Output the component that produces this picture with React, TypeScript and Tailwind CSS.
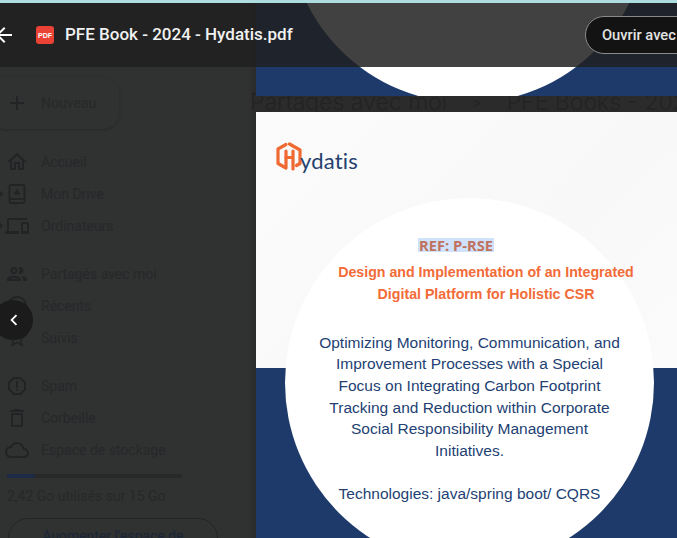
import {
  MdArrowBack,
  MdChevronLeft,
  MdOutlineAdd,
  MdOutlineCloud,
  MdOutlineDelete,
  MdOutlineDevices,
  MdOutlineHome,
  MdOutlinePeople,
  MdOutlineReportGmailerrorred,
  MdOutlineSchedule,
  MdOutlineStarBorder,
} from "react-icons/md";
import type { ComponentType } from "react";

function DriveIcon({ className }: { className?: string }) {
  return (
    <svg viewBox="0 0 24 24" className={className} fill="none" stroke="currentColor" strokeWidth={1.8}>
      <rect x="4.5" y="3" width="15" height="18" rx="1.5" />
      <path d="M4.5 17h15" />
      <path d="M12 7.5l3 4.5H9z" fill="currentColor" strokeWidth={1} />
    </svg>
  );
}

type NavItem = { label: string; icon: ComponentType<{ className?: string }>; caret?: boolean };

const firstGroup: NavItem[] = [
  { label: "Accueil", icon: MdOutlineHome },
  { label: "Mon Drive", icon: DriveIcon, caret: true },
  { label: "Ordinateurs", icon: MdOutlineDevices, caret: true },
];
const secondGroup: NavItem[] = [
  { label: "Partagés avec moi", icon: MdOutlinePeople },
  { label: "Récents", icon: MdOutlineSchedule },
  { label: "Suivis", icon: MdOutlineStarBorder },
];
const thirdGroup: NavItem[] = [
  { label: "Spam", icon: MdOutlineReportGmailerrorred },
  { label: "Corbeille", icon: MdOutlineDelete },
  { label: "Espace de stockage", icon: MdOutlineCloud },
];

function NavRow({ item }: { item: NavItem }) {
  const Icon = item.icon;
  return (
    <div className="relative flex h-8 items-center">
      {item.caret && (
        <span className="absolute left-[-4px] h-1.5 w-1.5 rotate-45 bg-[#242526]" />
      )}
      <Icon className="ml-[5px] h-6 w-6 shrink-0 text-[#222324]" />
      <span className="ml-[12px] text-[14px] text-[#27282a]">{item.label}</span>
    </div>
  );
}

function Sidebar() {
  return (
    <aside className="relative h-full w-[256px] shrink-0 overflow-hidden bg-[#303131]">
      <div className="pointer-events-none absolute inset-y-0 right-0 w-2 bg-gradient-to-r from-transparent to-[#2a2a2a]" />
      <div className="pt-[74px]">
        <div className="ml-[-10px] flex h-[52px] w-[129px] items-center rounded-2xl pl-[15px] shadow-[0_1px_3px_rgba(0,0,0,0.22)]">
          <MdOutlineAdd className="h-6 w-6 text-[#222324]" />
          <span className="ml-[12px] text-[14px] text-[#27282a]">Nouveau</span>
        </div>
      </div>
      <nav className="mt-[17px] flex flex-col">
        {firstGroup.map((item) => (
          <NavRow key={item.label} item={item} />
        ))}
        <div className="h-4" />
        {secondGroup.map((item) => (
          <NavRow key={item.label} item={item} />
        ))}
        <div className="h-4" />
        {thirdGroup.map((item) => (
          <NavRow key={item.label} item={item} />
        ))}
      </nav>
      <div className="ml-[7px] mt-[8px] h-1 w-[175px] rounded-full bg-[#2a292a]">
        <div className="h-1 w-[28px] rounded-full bg-[#1c2c47]" />
      </div>
      <p className="ml-[7px] mt-[8px] text-[14px] leading-5 text-[#27282a]">2,42 Go utilisés sur 15 Go</p>
      <div className="ml-[8px] mt-[12px] flex h-10 w-[210px] justify-center rounded-full border border-[#232425] pt-[7px] text-[14px] text-[#1a2638]">
        Augmenter l'espace de
      </div>
    </aside>
  );
}

function HydatisLogo() {
  return (
    <div className="flex items-end">
      <svg viewBox="0 0 28 30" className="h-[30px] w-[28px]" fill="none" stroke="#ee6a32" strokeWidth={3.2} strokeLinejoin="round" strokeLinecap="round">
        <path d="M11 2.5 3 7v14.5l8 4.5V9" />
        <path d="M14.5 2 25 8v13.5l-3.5 2" />
        <path d="M18 27V9M11 15.5h7" />
      </svg>
      <span className="ml-[-3px] font-['Lato',sans-serif] text-[22px] leading-[22px] tracking-[0.2px] text-[#24406d]">
        ydatis
      </span>
    </div>
  );
}

function CoverPage() {
  return (
    <div className="relative min-h-0 flex-1 overflow-hidden bg-gradient-to-br from-[#fbfbfb] via-[#f8f8f8] to-[#fdfdfd]">
      <div className="absolute inset-x-0 bottom-0 h-[170px] bg-[#1e3a6b]" />
      <div className="absolute left-[29px] top-[86px] h-[369px] w-[369px] rounded-full bg-white" />
      <div className="relative flex flex-col pl-[19px] pt-[30px]">
        <HydatisLogo />
        <div className="mt-[66px] ml-[143px] w-fit bg-[#cfe2f9] px-[1px] font-['Open_Sans',sans-serif] text-[14.7px] font-bold leading-[14px] text-[#c0725e]">
          REF: P-RSE
        </div>
        <div className="mt-[9px] ml-[1px] w-[420px] text-center font-['Liberation_Sans',sans-serif] text-[14.2px] font-bold leading-[22px] text-[#f26b38]">
          <p>Design and Implementation of an Integrated</p>
          <p>Digital Platform for Holistic CSR</p>
        </div>
        <div className="mt-[26.5px] ml-[-19px] w-[427px] text-center font-['Liberation_Sans',sans-serif] text-[15.5px] leading-[21.7px] text-[#233f73]">
          <p>Optimizing Monitoring, Communication, and</p>
          <p>Improvement Processes with a Special</p>
          <p>Focus on Integrating Carbon Footprint</p>
          <p>Tracking and Reduction within Corporate</p>
          <p>Social Responsibility Management</p>
          <p>Initiatives.</p>
          <p className="mt-[21px]">Technologies: java/spring boot/ CQRS</p>
        </div>
      </div>
    </div>
  );
}

function Viewer() {
  return (
    <main className="relative flex h-full min-w-0 flex-1 flex-col bg-[#2b2b2b]">
      <div className="absolute left-[-6px] top-[85px] flex items-center whitespace-nowrap font-['Inter',sans-serif] text-[23px] font-light leading-[28px] text-[#232323]">
        <span>Partagés avec moi</span>
        <span className="ml-[24px] text-[16px]">&gt;</span>
        <span className="ml-[25px]">PFE Books - 2024</span>
      </div>
      <div className="relative h-[93px] shrink-0 overflow-hidden bg-[#1e3a6b]">
        <div className="absolute left-[32px] top-[-260px] h-[360px] w-[360px] rounded-full bg-white" />
      </div>
      <div className="h-[16px] shrink-0" />
      <CoverPage />
    </main>
  );
}

function TopBar() {
  return (
    <header className="absolute inset-x-0 top-0 flex h-[64px] items-center overflow-hidden bg-[#202020]/85 font-['Roboto',sans-serif]">
      <MdArrowBack className="ml-[-8px] h-[24px] w-[24px] shrink-0 text-white" />
      <span className="ml-[20px] flex h-[18px] w-[18px] shrink-0 items-center justify-center rounded-[3px] bg-[#ea4335] font-['Liberation_Sans',sans-serif] text-[7px] font-bold leading-none text-white">
        PDF
      </span>
      <span className="ml-[11px] whitespace-nowrap text-[17px] font-medium text-[#f1f1f1]">
        PFE Book - 2024 - Hydatis.pdf
      </span>
      <div className="ml-auto mr-[-60px] flex h-[38px] w-[152px] shrink-0 items-center rounded-full border border-[#8a8a8a] bg-[#131313] pl-4 text-[14.7px] font-medium whitespace-nowrap text-[#e4e4e4]">
        Ouvrir avec
      </div>
    </header>
  );
}

export default function App() {
  return (
    <div className="flex h-[538px] w-[677px] flex-col overflow-hidden bg-[#202020] font-['Roboto',sans-serif]">
      <div className="h-[3px] shrink-0 bg-[#aedde0]" />
      <div className="relative flex min-h-0 flex-1">
        <Sidebar />
        <Viewer />
        <TopBar />
        <button className="absolute left-[-7px] top-[297px] flex h-10 w-10 items-center justify-center rounded-full bg-[#1b1b1b] text-white">
          <MdChevronLeft className="ml-[1px] h-[22px] w-[22px]" />
        </button>
      </div>
    </div>
  );
}
